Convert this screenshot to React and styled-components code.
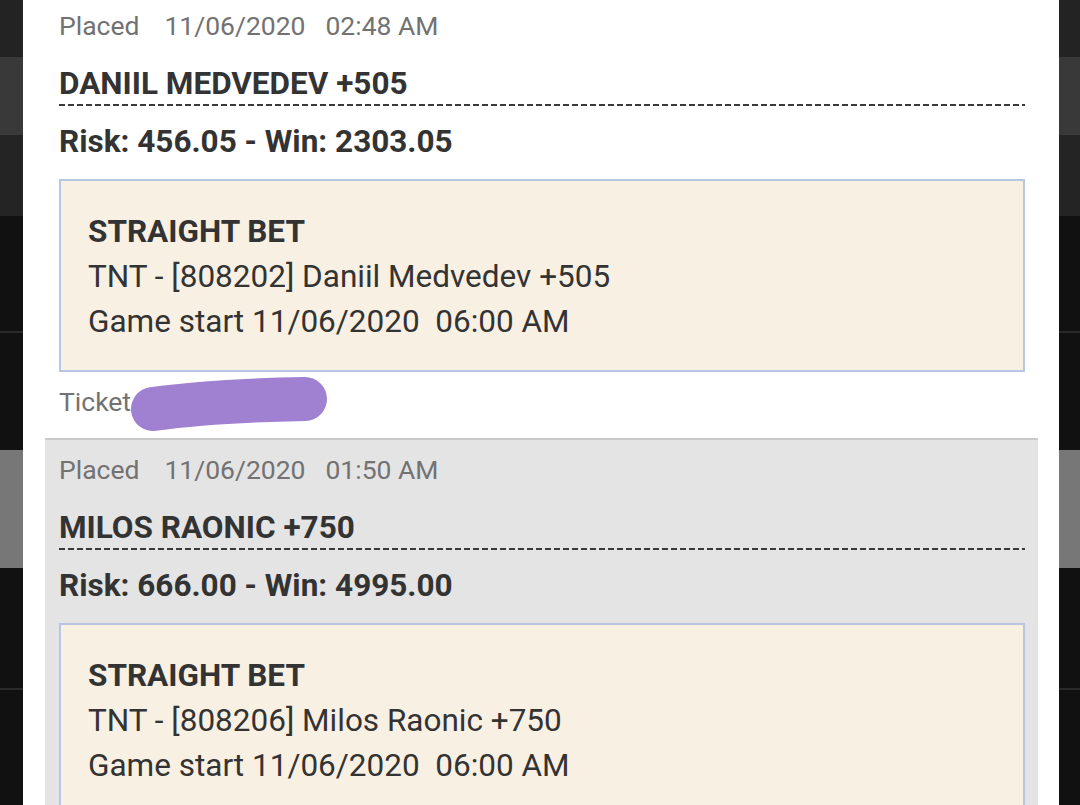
import React from "react";
import styled, { createGlobalStyle } from "styled-components";

const Global = createGlobalStyle`
  html, body { margin: 0; padding: 0; }
  body {
    width: 1080px;
    height: 805px;
    overflow: hidden;
    background: #111;
    font-family: Roboto, "Noto Sans", "Liberation Sans", sans-serif;
  }
`;

const Screen = styled.div`
  position: relative;
  width: 1080px;
  height: 805px;
  overflow: hidden;
`;

const Backdrop = styled.div`
  display: flex;
  flex-direction: column;
  height: 100%;
`;

const Band = styled.div`
  height: ${(p) => p.h}px;
  background: ${(p) => p.c};
  border-bottom: ${(p) => (p.line ? "2px solid #2a2a2a" : "none")};
  box-sizing: border-box;
  flex-shrink: 0;
`;

const Modal = styled.div`
  position: absolute;
  top: 0;
  left: 23px;
  width: 1036px;
  height: 805px;
  background: #fff;
  padding: 0 21px 0 22px;
  box-sizing: border-box;
  overflow: hidden;
`;

const List = styled.div`
  display: flex;
  flex-direction: column;
  margin-top: -6px;
`;

const Item = styled.div`
  position: relative;
  background: ${(p) => (p.shaded ? "#e4e4e4" : "#fff")};
  border-top: 2px solid ${(p) => (p.shaded ? "#c9c9c9" : "#fff")};
  padding: 12px 13px 18px 14px;
  display: flex;
  flex-direction: column;
`;

const Meta = styled.div`
  display: flex;
  font-size: 26.5px;
  line-height: 36px;
  color: #727272;
`;

const MetaPart = styled.span`
  margin-left: ${(p) => p.gap || 0}px;
`;

const Title = styled.div`
  margin-top: 20px;
  font-size: 31.5px;
  line-height: 40px;
  font-weight: 700;
  color: #333;
  &::after {
    content: "";
    display: block;
    height: 2px;
    background-image: repeating-linear-gradient(
      to right,
      #3a3a3a 0 6px,
      transparent 6px 9px
    );
  }
`;

const Amounts = styled.div`
  margin-top: 16px;
  font-size: 31.5px;
  line-height: 40px;
  font-weight: 700;
  color: #333;
`;

const BetBox = styled.div`
  margin-top: 17px;
  background: #f9f0e4;
  border: 2px solid #b7c6e2;
  padding: 28px 27px 26px;
  display: flex;
  flex-direction: column;
  color: #333;
  font-size: 31.5px;
  line-height: 45px;
`;

const BetType = styled.div`
  font-weight: 700;
`;

const BetLine = styled.div`
  white-space: pre;
`;

const Ticket = styled.div`
  margin-top: 12px;
  position: relative;
  font-size: 26.5px;
  line-height: 36px;
  color: #727272;
`;

const Scribble = styled.svg`
  position: absolute;
  left: 70px;
  top: -5px;
  width: 200px;
  height: 56px;
  overflow: visible;
`;

const bets = [
  {
    time: "02:48 AM",
    title: "DANIIL MEDVEDEV +505",
    risk: "456.05",
    win: "2303.05",
    line: "TNT - [808202] Daniil Medvedev +505",
  },
  {
    time: "01:50 AM",
    title: "MILOS RAONIC +750",
    risk: "666.00",
    win: "4995.00",
    line: "TNT - [808206] Milos Raonic +750",
  },
];

const bands = [
  { h: 57, c: "#232323" },
  { h: 78, c: "#393939" },
  { h: 81, c: "#242424" },
  { h: 117, c: "#111", line: true },
  { h: 117, c: "#111" },
  { h: 118, c: "#777" },
  { h: 122, c: "#111", line: true },
  { h: 120, c: "#111" },
];

export default function App() {
  return (
    <>
      <Global />
      <Screen>
        <Backdrop>
          {bands.map((b, i) => (
            <Band key={i} h={b.h} c={b.c} line={b.line} />
          ))}
        </Backdrop>
        <Modal>
          <List>
            {bets.map((b, i) => (
              <Item key={i} shaded={i === 1}>
                <Meta>
                  <MetaPart>Placed</MetaPart>
                  <MetaPart gap={25}>11/06/2020</MetaPart>
                  <MetaPart gap={20}>{b.time}</MetaPart>
                </Meta>
                <Title>{b.title}</Title>
                <Amounts>
                  Risk: {b.risk} - Win: {b.win}
                </Amounts>
                <BetBox>
                  <BetType>STRAIGHT BET</BetType>
                  <BetLine>{b.line}</BetLine>
                  <BetLine>{"Game start 11/06/2020  06:00 AM"}</BetLine>
                </BetBox>
                <Ticket>
                  Ticket #
                  {i === 0 && (
                    <Scribble viewBox="0 0 200 56">
                      <path
                        d="M24 30 C 60 25, 120 21, 176 20"
                        stroke="#9f80d1"
                        strokeWidth="44"
                        strokeLinecap="round"
                        fill="none"
                      />
                    </Scribble>
                  )}
                </Ticket>
              </Item>
            ))}
          </List>
        </Modal>
      </Screen>
    </>
  );
}
